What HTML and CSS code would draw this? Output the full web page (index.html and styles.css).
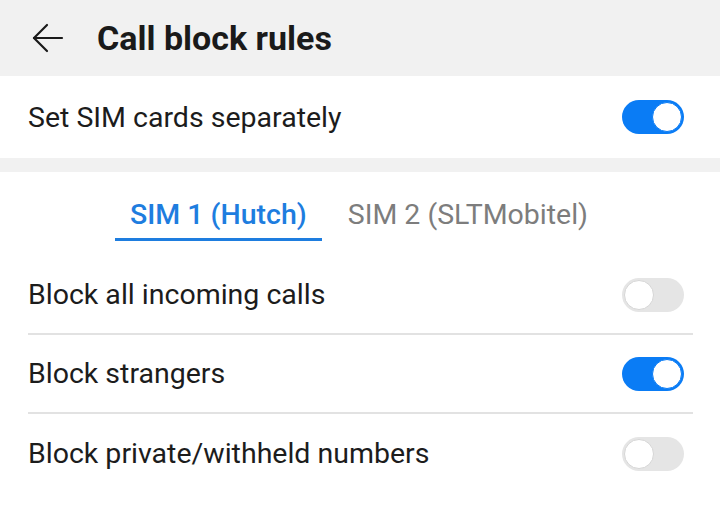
FILE: index.html
```html
<!DOCTYPE html>
<html>
<head>
<meta charset="utf-8">
<link rel="stylesheet" href="styles.css">
</head>
<body>
<div class="screen">
  <header class="topbar">
    <svg class="back" width="32" height="32" viewBox="0 0 32 32" fill="none" stroke="#1a1a1a" stroke-width="2.2" stroke-linecap="round" stroke-linejoin="round">
      <path d="M2 16 H30"/>
      <path d="M15 3 L2 16 L15 29"/>
    </svg>
    <h1 class="title">Call block rules</h1>
  </header>
  <section class="card first">
    <div class="row">
      <span class="label">Set SIM cards separately</span>
      <span class="toggle on"><span class="knob"></span></span>
    </div>
  </section>
  <div class="gap"></div>
  <section class="card">
    <nav class="tabs">
      <span class="tab active">SIM 1 (Hutch)</span>
      <span class="tab">SIM 2 (SLTMobitel)</span>
    </nav>
    <div class="list">
      <div class="row item">
        <span class="label">Block all incoming calls</span>
        <span class="toggle"><span class="knob"></span></span>
      </div>
      <div class="row item">
        <span class="label">Block strangers</span>
        <span class="toggle on"><span class="knob"></span></span>
      </div>
      <div class="row item">
        <span class="label">Block private/withheld numbers</span>
        <span class="toggle"><span class="knob"></span></span>
      </div>
    </div>
  </section>
</div>
</body>
</html>
```
FILE: styles.css
```css
html, body {
  margin: 0;
  padding: 0;
  background: #ffffff;
}
body {
  font-family: Roboto, "Noto Sans", sans-serif;
  color: #1c1c1c;
}
.screen {
  width: 720px;
  height: 525px;
  overflow: hidden;
  background: #ffffff;
}
.topbar {
  height: 76px;
  background: #f1f1f1;
  display: flex;
  align-items: center;
  padding-left: 32px;
  box-sizing: border-box;
}
.back {
  display: block;
  margin-top: -1px;
}
.title {
  margin: 0 0 0 33px;
  font-size: 34px;
  font-weight: 700;
  color: #1a1a1a;
  letter-spacing: 0;
}
.card {
  background: #ffffff;
}
.first .row {
  height: 82px;
}
.gap {
  height: 14px;
  background: #f1f1f1;
}
.row {
  display: flex;
  align-items: center;
  justify-content: space-between;
  padding: 0 36px 0 28px;
}
.label {
  font-size: 28.5px;
  color: #1c1c1c;
}
.tabs {
  display: flex;
  padding-left: 115px;
  height: 69px;
  align-items: stretch;
  gap: 26px;
}
.tab {
  font-size: 28.5px;
  color: #7d7d7d;
  display: flex;
  align-items: center;
  padding: 18px 0 0;
  box-sizing: border-box;
  border-bottom: 3px solid transparent;
}
.tab.active {
  color: #1e7ddf;
  font-weight: 500;
  padding: 18px 15px 0;
  border-bottom-color: #1e7ddf;
}
.list {
  margin-top: 15px;
  padding: 0 27px 0 28px;
}
.list .row {
  padding: 0 9px 0 0;
}
.item {
  height: 79px;
  box-sizing: border-box;
  border-bottom: 2px solid #e2e2e2;
}
.item:last-child {
  border-bottom: none;
}
.toggle {
  width: 62px;
  height: 34px;
  border-radius: 17px;
  background: #e5e5e5;
  position: relative;
  box-sizing: border-box;
  flex: none;
}
.toggle .knob {
  position: absolute;
  left: 2px;
  top: 2px;
  width: 30px;
  height: 30px;
  border-radius: 50%;
  background: #ffffff;
  box-sizing: border-box;
  border: 1px solid #d6d6d6;
}
.toggle.on {
  background: #0a7cf5;
}
.toggle.on .knob {
  left: auto;
  right: 2px;
  border-color: #0a7cf5;
}
```
